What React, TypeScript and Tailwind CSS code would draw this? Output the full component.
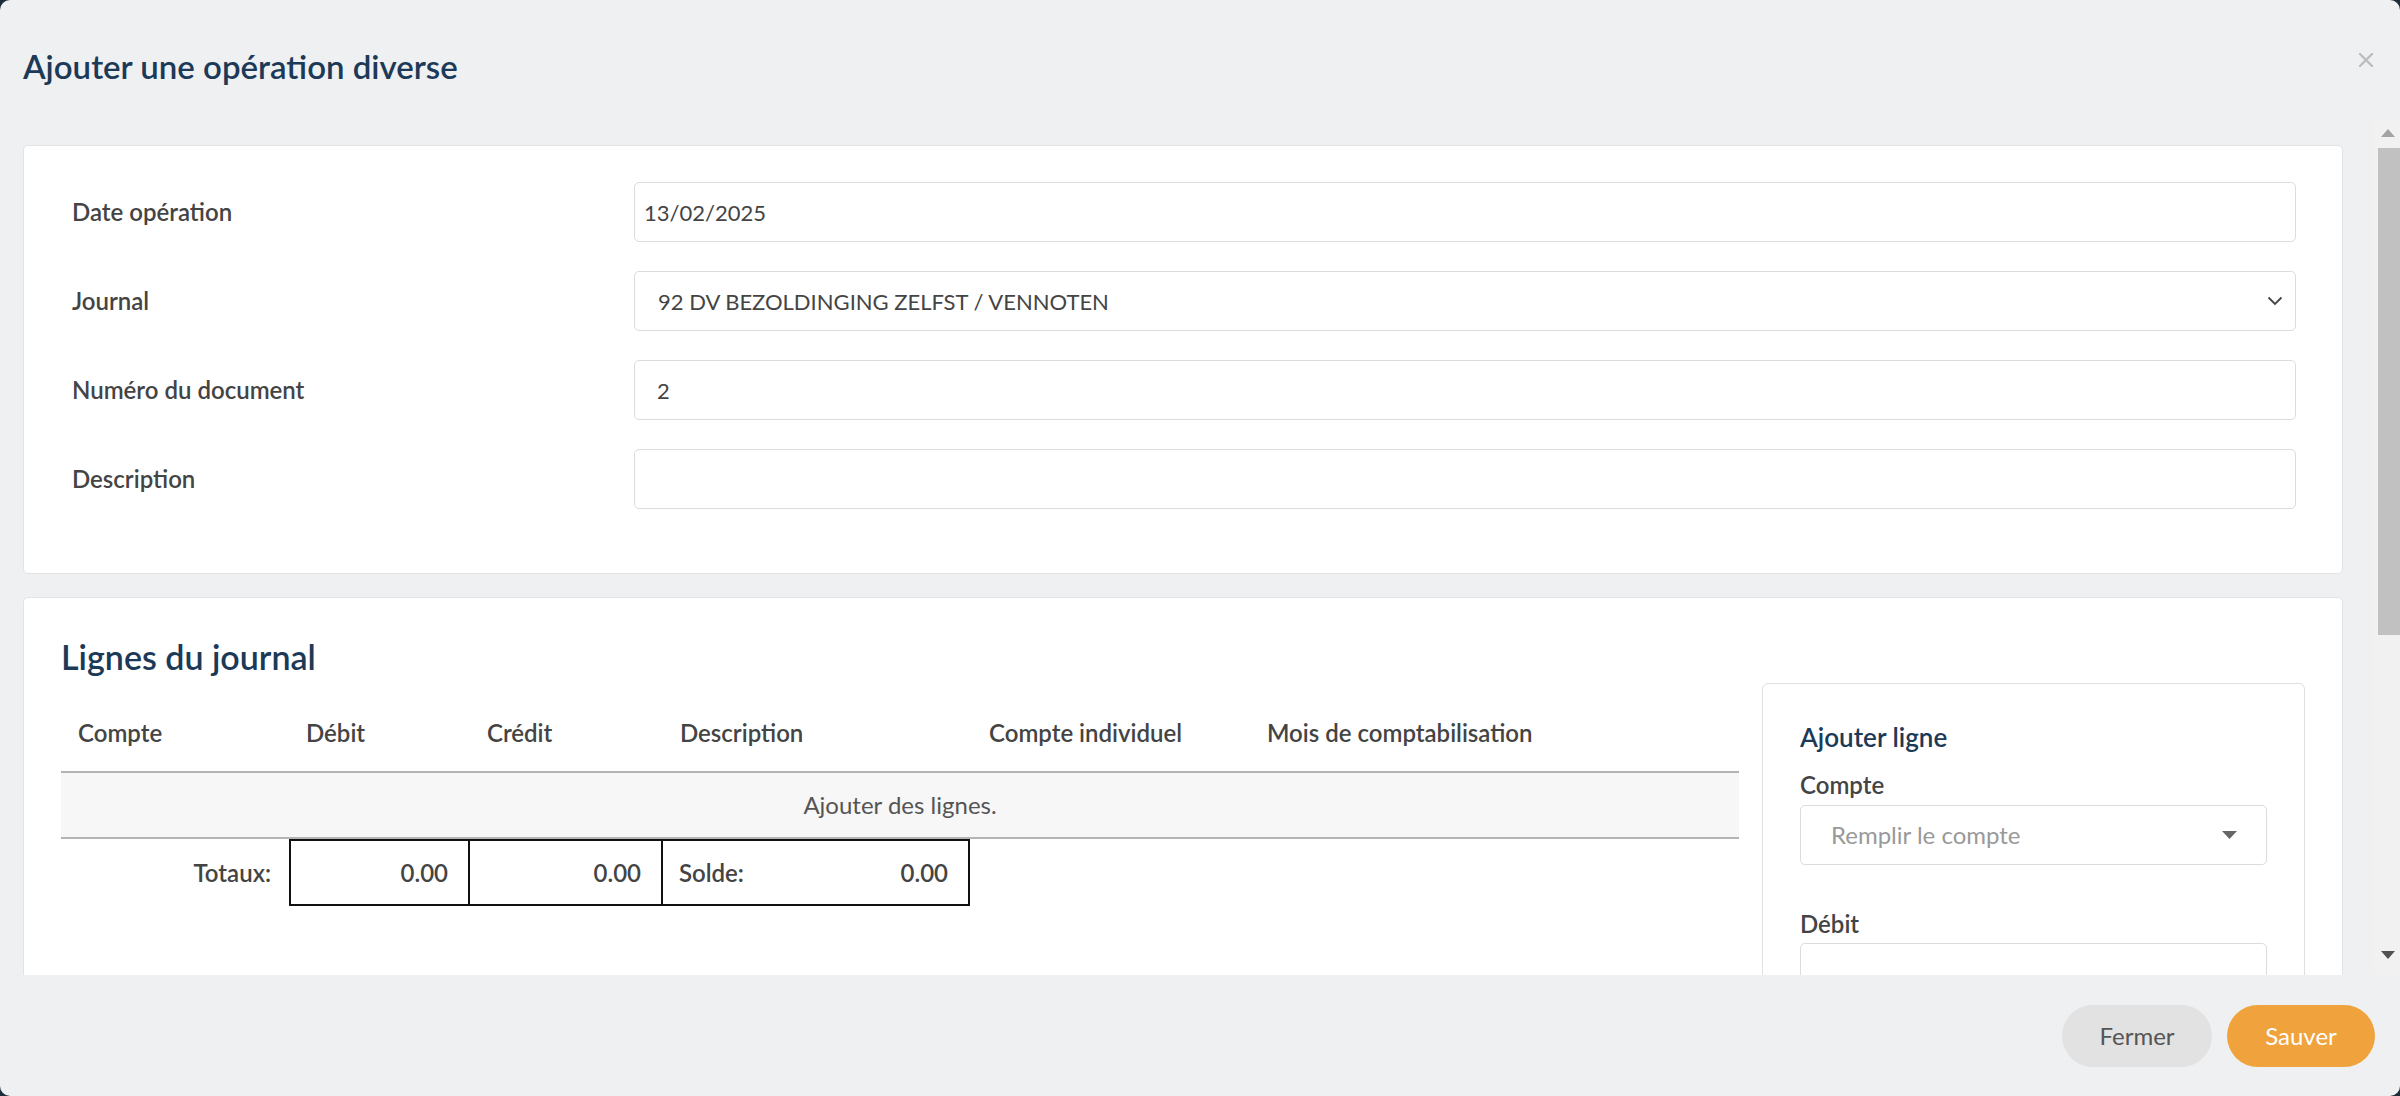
const labelCls = "text-[24px] font-semibold text-[#444] whitespace-nowrap";
const inputCls = "flex h-[60px] items-center rounded-[5px] border border-[#dcdcdc] bg-white text-[22px] text-[#444]";

function TopField({ label, children }: { label: string; children?: React.ReactNode }) {
  return (
    <>
      <div className={`flex h-[60px] items-center ${labelCls}`}>{label}</div>
      {children}
    </>
  );
}

function Scrollbar() {
  return (
    <div className="flex w-[26px] shrink-0 flex-col bg-[#f1f1f1]">
      <div className="flex h-[25px] items-center justify-center pl-[2px]">
        <svg width="14" height="8" viewBox="0 0 14 8">
          <polygon points="7,0 14,8 0,8" fill="#a3a3a3" />
        </svg>
      </div>
      <div className="flex-1 pl-[4px] pt-[3px] pb-[315px]">
        <div className="h-[487px] bg-[#c1c1c1]" />
      </div>
      <div className="flex h-[25px] items-start justify-center pl-[2px] pt-[1px]">
        <svg width="14" height="8" viewBox="0 0 14 8">
          <polygon points="0,0 14,0 7,8" fill="#505050" />
        </svg>
      </div>
    </div>
  );
}

export default function App() {
  const columns = ["Compte", "Débit", "Crédit", "Description", "Compte individuel", "Mois de comptabilisation"];

  return (
    <div className="h-[1096px] w-full bg-[#1f2d3b] font-['Lato',sans-serif]">
      <div className="flex h-full flex-col overflow-hidden rounded-[10px] bg-[#eff0f2]">
        {/* Header */}
        <div className="flex h-[120px] shrink-0 items-start justify-between pl-[23px] pr-[27px] pt-[45px]">
          <h2 className="text-[33px] font-semibold leading-[42px] text-[#1c3a57]">Ajouter une opération diverse</h2>
          <button className="mt-[8px] flex h-[14px] w-[14px] items-center justify-center">
            <svg width="14" height="14" viewBox="0 0 14 14">
              <path d="M1 1 L13 13 M13 1 L1 13" stroke="#bdbdbd" strokeWidth="2.4" strokeLinecap="round" />
            </svg>
          </button>
        </div>

        {/* Body */}
        <div className="flex h-[855px] shrink-0">
          <div className="flex-1 overflow-hidden pl-[23px] pr-[31px] pt-[25px]">
            {/* Card 1 */}
            <div className="rounded-[5px] border border-[#e2e3e5] bg-white pb-[64px] pl-[48px] pr-[46px] pt-[36px]">
              <div className="grid grid-cols-[562px_1fr] gap-y-[29px]">
                <TopField label="Date opération">
                  <div className={`${inputCls} pl-[9px]`}>13/02/2025</div>
                </TopField>
                <TopField label="Journal">
                  <div className={`${inputCls} justify-between pl-[23px] pr-[12px]`}>
                    <span>92 DV BEZOLDINGING ZELFST / VENNOTEN</span>
                    <svg width="16" height="10" viewBox="0 0 16 10">
                      <polyline points="1.5,1.5 8,8 14.5,1.5" fill="none" stroke="#444" strokeWidth="1.8" />
                    </svg>
                  </div>
                </TopField>
                <TopField label="Numéro du document">
                  <div className={`${inputCls} pl-[22px]`}>2</div>
                </TopField>
                <TopField label="Description">
                  <div className={inputCls} />
                </TopField>
              </div>
            </div>

            {/* Card 2 */}
            <div className="mt-[23px] rounded-[5px] border border-[#e2e3e5] bg-white px-[37px] pb-[40px] pt-[38px]">
              <h3 className="text-[34px] font-semibold leading-[42px] text-[#1c3a57]">Lignes du journal</h3>
              <div className="mt-[5px] flex gap-[23px]">
                {/* Table */}
                <div className="flex-1 pt-[22px]">
                  <div className="grid h-[66px] grid-cols-[228px_181px_193px_309px_278px_1fr] items-center pb-[10px]">
                    {columns.map((c) => (
                      <div key={c} className={`pl-[17px] ${labelCls}`}>
                        {c}
                      </div>
                    ))}
                  </div>
                  <div className="flex h-[68px] items-center justify-center border-y-2 border-[#b4b4b4] bg-[#f7f7f7] text-[24px] text-[#555]">
                    Ajouter des lignes.
                  </div>
                  <div className="grid h-[67px] grid-cols-[228px_181px_193px_307px_1fr] text-[24px] font-semibold text-[#444]">
                    <div className="flex items-center justify-end pr-[18px]">Totaux:</div>
                    <div className="flex items-center justify-end border-2 border-[#111] pr-[20px]">0.00</div>
                    <div className="flex items-center justify-end border-2 border-l-0 border-[#111] pr-[20px]">0.00</div>
                    <div className="flex items-center justify-between border-2 border-l-0 border-[#111] pl-[16px] pr-[20px]">
                      <span>Solde:</span>
                      <span>0.00</span>
                    </div>
                    <div />
                  </div>
                </div>

                {/* Add line panel */}
                <div className="w-[543px] shrink-0 rounded-[6px] border border-[#dfe0e2] px-[37px] pb-[60px] pt-[35px]">
                  <h4 className="text-[26px] font-semibold leading-[36px] text-[#1c3a57]">Ajouter ligne</h4>
                  <div className={`mt-[12px] leading-[36px] ${labelCls}`}>Compte</div>
                  <div className={`${inputCls} mt-[2px] justify-between pl-[30px] pr-[29px] text-[24px]`}>
                    <span className="text-[#999]">Remplir le compte</span>
                    <svg width="15" height="8" viewBox="0 0 15 8">
                      <polygon points="0,0 15,0 7.5,8" fill="#666" />
                    </svg>
                  </div>
                  <div className={`mt-[41px] leading-[36px] ${labelCls}`}>Débit</div>
                  <div className={`${inputCls} mt-[1px]`} />
                </div>
              </div>
            </div>
          </div>
          <Scrollbar />
        </div>

        {/* Footer */}
        <div className="flex flex-1 items-center justify-end gap-[15px] pr-[25px]">
          <button className="h-[62px] w-[150px] rounded-full bg-[#e2e2e2] text-[24px] text-[#555]">Fermer</button>
          <button className="h-[62px] w-[148px] rounded-full bg-[#f0a33c] text-[24px] text-white">Sauver</button>
        </div>
      </div>
    </div>
  );
}
